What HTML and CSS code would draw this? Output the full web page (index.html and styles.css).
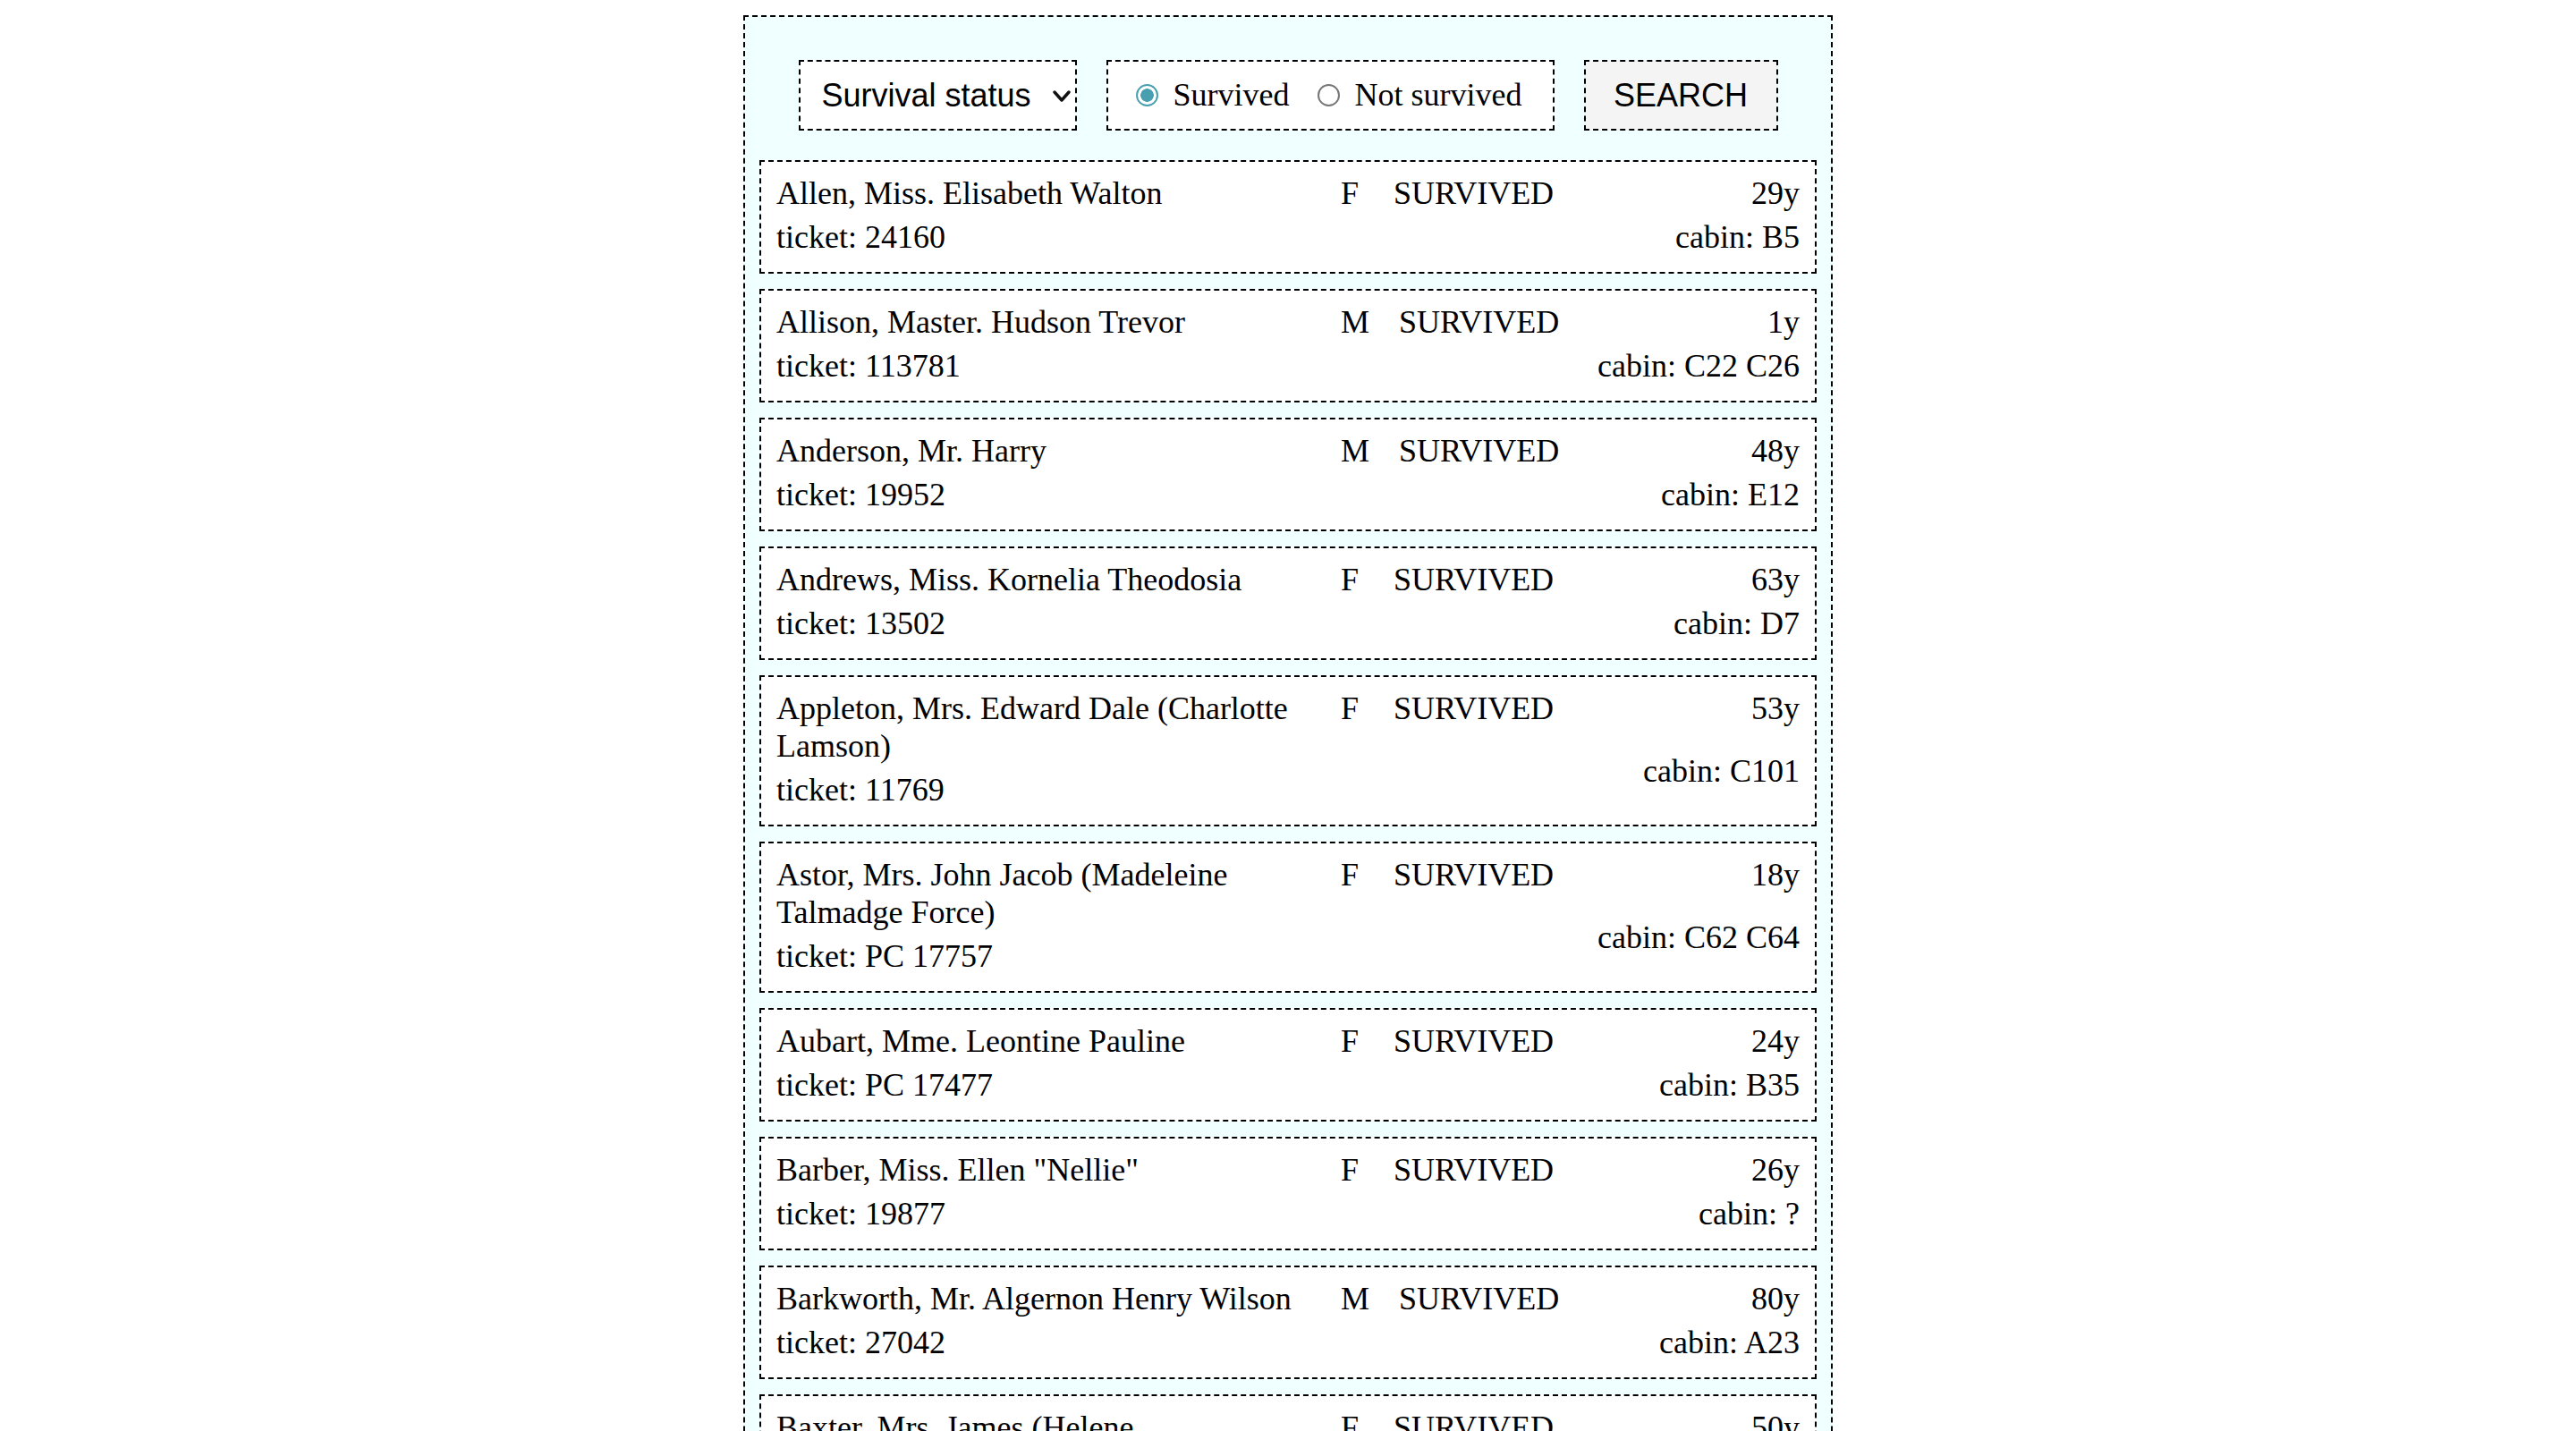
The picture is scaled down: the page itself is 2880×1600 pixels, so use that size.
FILE: index.html
```html
<!DOCTYPE html>
<html lang="en">
<head>
<meta charset="utf-8">
<title>Titanic passengers</title>
<link rel="stylesheet" href="styles.css">
</head>
<body>
<main class="panel">
  <form class="controls">
    <div class="select-wrap">
      <select class="status-select">
        <option>Survival status</option>
      </select>
      <svg class="chevron" width="20" height="14" viewBox="0 0 20 14"><polyline points="2,2 10,11 18,2" fill="none" stroke="#111" stroke-width="3.4" stroke-linecap="round" stroke-linejoin="round"/></svg>
    </div>
    <div class="radios">
      <label class="radio"><input type="radio" name="s" checked><span>Survived</span></label>
      <label class="radio"><input type="radio" name="s"><span>Not survived</span></label>
    </div>
    <button type="button" class="search">SEARCH</button>
  </form>

  <section class="list">
    <div class="card">
      <div class="who"><div>Allen, Miss. Elisabeth Walton</div><div>ticket: 24160</div></div>
      <div class="sex">F</div><div class="status">SURVIVED</div>
      <div class="where"><div>29y</div><div>cabin: B5</div></div>
    </div>
    <div class="card">
      <div class="who"><div>Allison, Master. Hudson Trevor</div><div>ticket: 113781</div></div>
      <div class="sex">M</div><div class="status">SURVIVED</div>
      <div class="where"><div>1y</div><div>cabin: C22 C26</div></div>
    </div>
    <div class="card">
      <div class="who"><div>Anderson, Mr. Harry</div><div>ticket: 19952</div></div>
      <div class="sex">M</div><div class="status">SURVIVED</div>
      <div class="where"><div>48y</div><div>cabin: E12</div></div>
    </div>
    <div class="card">
      <div class="who"><div>Andrews, Miss. Kornelia Theodosia</div><div>ticket: 13502</div></div>
      <div class="sex">F</div><div class="status">SURVIVED</div>
      <div class="where"><div>63y</div><div>cabin: D7</div></div>
    </div>
    <div class="card">
      <div class="who"><div>Appleton, Mrs. Edward Dale (Charlotte Lamson)</div><div>ticket: 11769</div></div>
      <div class="sex">F</div><div class="status">SURVIVED</div>
      <div class="where"><div>53y</div><div>cabin: C101</div></div>
    </div>
    <div class="card">
      <div class="who"><div>Astor, Mrs. John Jacob (Madeleine Talmadge Force)</div><div>ticket: PC 17757</div></div>
      <div class="sex">F</div><div class="status">SURVIVED</div>
      <div class="where"><div>18y</div><div>cabin: C62 C64</div></div>
    </div>
    <div class="card">
      <div class="who"><div>Aubart, Mme. Leontine Pauline</div><div>ticket: PC 17477</div></div>
      <div class="sex">F</div><div class="status">SURVIVED</div>
      <div class="where"><div>24y</div><div>cabin: B35</div></div>
    </div>
    <div class="card">
      <div class="who"><div>Barber, Miss. Ellen "Nellie"</div><div>ticket: 19877</div></div>
      <div class="sex">F</div><div class="status">SURVIVED</div>
      <div class="where"><div>26y</div><div>cabin: ?</div></div>
    </div>
    <div class="card">
      <div class="who"><div>Barkworth, Mr. Algernon Henry Wilson</div><div>ticket: 27042</div></div>
      <div class="sex">M</div><div class="status">SURVIVED</div>
      <div class="where"><div>80y</div><div>cabin: A23</div></div>
    </div>
    <div class="card">
      <div class="who"><div>Baxter, Mrs. James (Helene DeLaudeniere Chaput)</div><div>ticket: PC 17558</div></div>
      <div class="sex">F</div><div class="status">SURVIVED</div>
      <div class="where"><div>50y</div><div>cabin: B58 B60</div></div>
    </div>
    <div class="card">
      <div class="who"><div>Bazzani, Miss. Albina</div><div>ticket: 11813</div></div>
      <div class="sex">F</div><div class="status">SURVIVED</div>
      <div class="where"><div>32y</div><div>cabin: D15</div></div>
    </div>
  </section>
</main>
</body>
</html>
```

FILE: styles.css
```css
html, body {
  margin: 0;
  padding: 0;
  background: #ffffff;
}

body {
  font-family: "Liberation Serif", "Times New Roman", serif;
  font-size: 36px;
  color: #000;
}

.panel {
  box-sizing: border-box;
  width: 1218px;
  margin: 17px auto 0;
  padding: 48px 16px 16px;
  border: 2px dashed #000;
  background: #f0ffff;
}

.controls {
  display: flex;
  justify-content: center;
  gap: 33px;
  margin: 0 0 33px;
}

.select-wrap {
  position: relative;
  width: 311px;
  height: 79px;
}

.status-select {
  box-sizing: border-box;
  width: 100%;
  height: 100%;
  margin: 0;
  padding: 0 0 0 24px;
  border: 2px dashed #000;
  border-radius: 0;
  background: #fff;
  font-family: "Liberation Sans", Arial, sans-serif;
  font-size: 36px;
  color: #000;
  -webkit-appearance: none;
  appearance: none;
  outline: none;
}

.chevron {
  position: absolute;
  right: 7px;
  top: 100%;
  margin-top: -45px;
  pointer-events: none;
}

.radios {
  box-sizing: border-box;
  width: 501px;
  height: 79px;
  display: flex;
  align-items: center;
  gap: 31px;
  padding: 0 0 0 31px;
  border: 2px dashed #000;
  background: #fff;
}

.radio {
  display: flex;
  align-items: center;
  gap: 17px;
  line-height: 42px;
}

.radio span {
  position: relative;
  top: -1px;
}

.radio input {
  -webkit-appearance: none;
  appearance: none;
  box-sizing: border-box;
  width: 25px;
  height: 25px;
  margin: 0;
  border: 2px solid #767676;
  border-radius: 50%;
  background: #fff;
}

.radio input:checked {
  border-color: #489fb0;
  background: radial-gradient(circle, #489fb0 0 7px, #fff 7.6px);
}

.search {
  box-sizing: border-box;
  width: 217px;
  height: 79px;
  margin: 0;
  padding: 0;
  border: 2px dashed #000;
  border-radius: 0;
  background: #f4f4f4;
  font-family: "Liberation Sans", Arial, sans-serif;
  font-size: 36px;
  color: #000;
}

.list {
  display: flex;
  flex-direction: column;
  gap: 17px;
}

.card {
  display: flex;
  align-items: stretch;
  gap: 33px;
  padding: 14px 17px 18px;
  border: 2px dashed #000;
  background: #fff;
  line-height: 42px;
}

.who {
  width: 598px;
  flex: none;
  display: flex;
  flex-direction: column;
  gap: 7px;
}

.sex {
  min-width: 26px;
  align-self: flex-start;
}

.status {
  align-self: flex-start;
}

.where {
  flex: 1;
  display: grid;
  grid-template-rows: 1fr 1fr;
  row-gap: 7px;
  text-align: right;
}
```
